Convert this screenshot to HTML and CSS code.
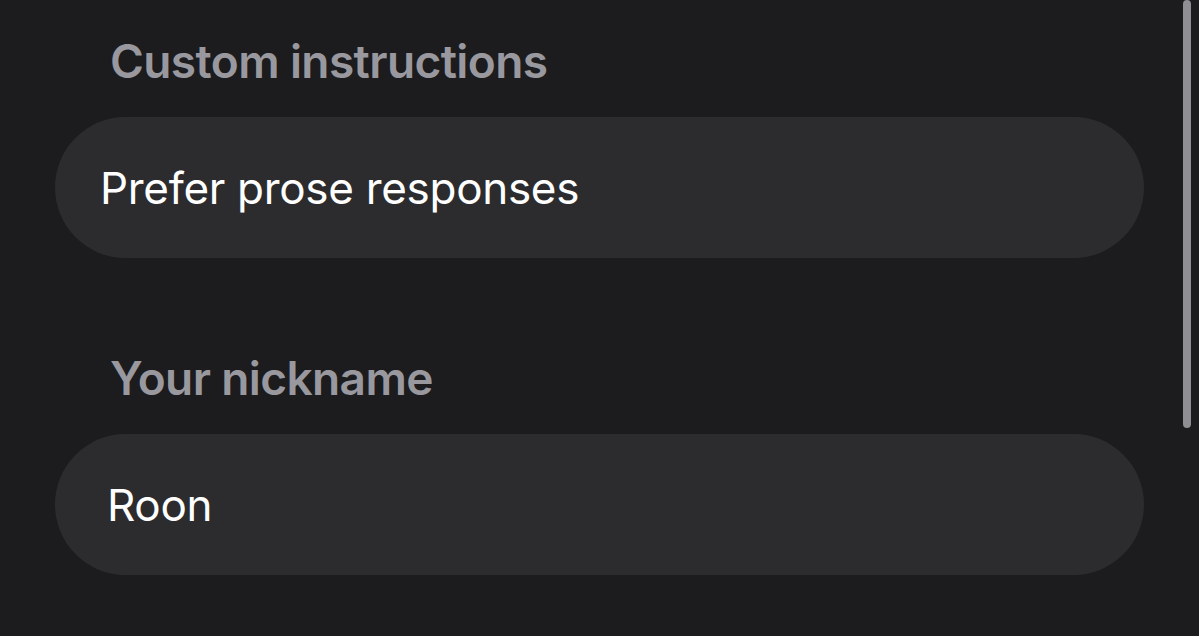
FILE: index.html
```html
<!DOCTYPE html>
<html lang="en">
<head>
<meta charset="utf-8">
<title>Settings</title>
<link rel="stylesheet" href="styles.css">
</head>
<body>
<main class="settings">
  <section class="group">
    <h2 class="group-label">Custom instructions</h2>
    <div class="field"><span class="field-text">Prefer prose responses</span></div>
  </section>
  <section class="group group--spaced">
    <h2 class="group-label">Your nickname</h2>
    <div class="field"><span class="field-text field-text--inset">Roon</span></div>
  </section>
</main>
<div class="scrollbar"></div>
</body>
</html>
```
FILE: styles.css
```css
html, body {
  margin: 0;
  padding: 0;
  background: #1c1c1e;
  height: 100%;
  overflow: hidden;
}
body {
  font-family: Inter, "Noto Sans", "Liberation Sans", sans-serif;
  position: relative;
}
.settings {
  display: flex;
  flex-direction: column;
  padding-top: 33px;
  padding-left: 55px;
  width: 1089px;
}
.group {
  display: flex;
  flex-direction: column;
  gap: 28px;
}
.group--spaced {
  margin-top: 92px;
}
.group-label {
  margin: 0 0 0 55px;
  font-size: 46px;
  line-height: 56px;
  font-weight: 600;
  letter-spacing: -0.6px;
  color: #98989e;
}
.field {
  height: 141px;
  border-radius: 71px;
  background: #2c2c2e;
  display: flex;
  align-items: center;
  padding-left: 45px;
}
.field-text {
  font-size: 44px;
  line-height: 52px;
  font-weight: 400;
  letter-spacing: -0.3px;
  color: #ffffff;
}
.field-text--inset {
  padding-left: 7px;
}
.scrollbar {
  position: absolute;
  top: 0;
  right: 8px;
  width: 8px;
  height: 428px;
  border-radius: 4px;
  background: #8e8e93;
}
```
